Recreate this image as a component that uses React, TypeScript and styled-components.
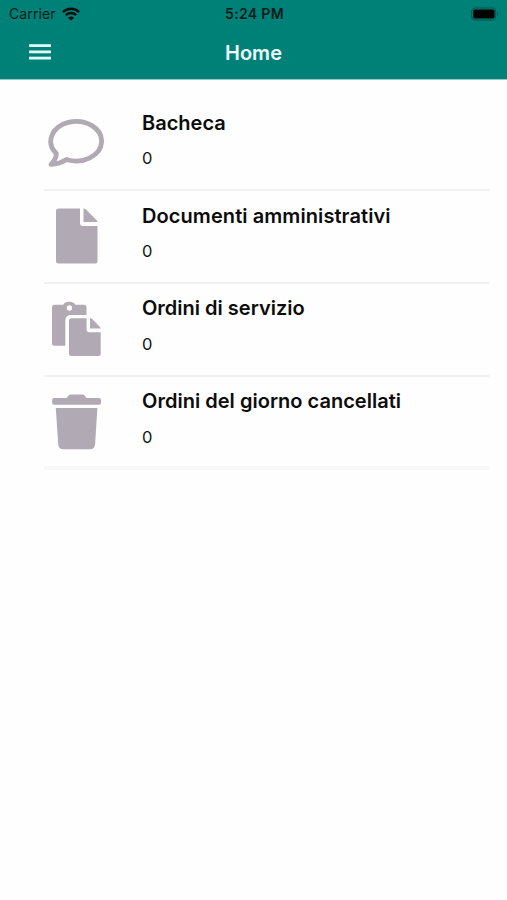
import React from "react";
import styled, { createGlobalStyle } from "styled-components";

const GlobalStyle = createGlobalStyle`
  * { box-sizing: border-box; }
  body {
    margin: 0;
    background: #fefefe;
    font-family: Inter, "Liberation Sans", sans-serif;
    color: #0c0c0c;
  }
`;

const Screen = styled.div`
  width: 507px;
  height: 900px;
  overflow: hidden;
  background: #fefefe;
`;

const Header = styled.header`
  height: 80px;
  background: #008178;
  border-bottom: 1px solid #8fc8c4;
`;

const StatusBar = styled.div`
  display: grid;
  grid-template-columns: 1fr auto 1fr;
  align-items: center;
  height: 28px;
  padding: 0 7px 0 9px;
  color: #021d1b;
  font-size: 14px;
  line-height: 20px;
`;

const Carrier = styled.div`
  display: flex;
  align-items: center;
  gap: 6px;
  letter-spacing: 0.1px;
`;

const WifiIcon = styled.svg`
  display: block;
  margin-top: -1px;
`;

const Time = styled.div`
  font-weight: 600;
  letter-spacing: 0.35px;
`;

const Battery = styled.svg`
  display: block;
  justify-self: end;
  margin-top: -1px;
`;

const NavBar = styled.div`
  display: grid;
  grid-template-columns: 1fr auto 1fr;
  align-items: center;
  height: 48px;
  padding: 0 29px;
`;

const MenuButton = styled.button`
  width: 22px;
  padding: 0;
  border: 0;
  background: none;
`;

const MenuIcon = styled.svg`
  display: block;
  fill: #e0fffc;
`;

const Title = styled.h1`
  margin: 0;
  padding-top: 2px;
  color: #effffd;
  font-size: 20px;
  font-weight: 600;
  line-height: 26px;
`;

const List = styled.ul`
  margin: 18px 18px 0 44px;
  padding: 0;
  list-style: none;
`;

const Row = styled.li<{ $last: boolean }>`
  display: flex;
  height: 93px;
  padding: 12px 0 0 4px;
  border-bottom: ${(p) => (p.$last ? "4px solid #f8f8f8" : "2px solid #f1f1f2")};
`;

const RowIcon = styled.svg`
  flex: none;
  display: block;
  margin: 5px 38px 0 0;
  fill: #b1aab5;
`;

const RowText = styled.div`
  display: flex;
  flex-direction: column;
  justify-content: space-between;
  height: 60px;
`;

const Label = styled.div<{ $spacing: number; $top: number }>`
  padding-top: ${(p) => p.$top}px;
  font-size: 20px;
  font-weight: 600;
  line-height: 24px;
  white-space: nowrap;
  letter-spacing: ${(p) => p.$spacing}px;
`;

const Count = styled.div`
  font-size: 16.5px;
  line-height: 24px;
  color: #151515;
`;

const Wifi = () => (
  <WifiIcon width="18" height="14" viewBox="0 0 18 14" fill="none" stroke="#02110f" strokeWidth="2.4">
    <path d="M0.9 5.1C5.4 0.6 12.6 0.6 17.1 5.1" />
    <path d="M3.8 8.1C6.7 5.3 11.3 5.3 14.2 8.1" />
    <path d="M9 13.8L6 10.7C7.7 9.2 10.3 9.2 12 10.7Z" fill="#02110f" stroke="none" />
  </WifiIcon>
);

const items = [
  {
    label: "Bacheca",
    spacing: 0,
    top: 1,
    icon: (
      <path
        d="M8.3 38.5A25.4 19.8 0 1 1 18.5 44.5Q11.5 49 3 49.4Q8.3 44 8.3 38.5Z"
        fill="none"
        stroke="#b1aab5"
        strokeWidth="4.8"
        strokeLinejoin="round"
      />
    ),
  },
  {
    label: "Documenti amministrativi",
    spacing: 0.08,
    top: 1,
    icon: (
      <>
        <path d="M10.5 0.5H32V15Q32 18 35 18H49.5V53Q49.5 55.5 47 55.5H10.5Q8 55.5 8 53V3Q8 0.5 10.5 0.5Z" />
        <path d="M35.5 0.5Q36.7 0.4 38 1.6L48.4 12Q49.5 13.2 49.5 14H35.5Z" />
      </>
    ),
  },
  {
    label: "Ordini di servizio",
    spacing: 0,
    top: 0,
    icon: (
      <>
        <path
          fillRule="evenodd"
          d="M6.5 3.8H15.2C16.5 -0.2 26 -0.2 27.3 3.8H36Q38.5 3.8 38.5 6.3V14H23Q17.3 14 17.3 19.7V44.7H6.5Q4 44.7 4 42.2V6.3Q4 3.8 6.5 3.8ZM24.1 7A2.7 2.7 0 1 0 18.7 7A2.7 2.7 0 1 0 24.1 7Z"
        />
        <path d="M23.5 17.2H38.6V28.5Q38.6 31.3 41.4 31.3H52.7V52.5Q52.7 55 50.2 55H23.5Q21 55 21 52.5V19.7Q21 17.2 23.5 17.2Z" />
        <path d="M42 17.2Q43.1 17 44.2 18.1L51.5 25.4Q52.7 26.6 52.7 27.6H42Z" />
      </>
    ),
  },
  {
    label: "Ordini del giorno cancellati",
    spacing: 0.02,
    top: 0,
    icon: (
      <>
        <path d="M6 4H18.5L20.5 1.4Q21.2 0.5 22.5 0.5H34.5Q35.8 0.5 36.5 1.4L38.5 4H51Q53 4 53 6V9Q53 10.8 51 10.8H6Q4.2 10.8 4.2 9V6Q4.2 4 6 4Z" />
        <path d="M7.8 14H49.4L47.1 50.3Q46.7 55.3 41.9 55.3H15.4Q10.5 55.3 10.2 50.3Z" />
      </>
    ),
  },
];

export default function App() {
  return (
    <>
      <GlobalStyle />
      <Screen>
        <Header>
          <StatusBar>
            <Carrier>
              Carrier
              <Wifi />
            </Carrier>
            <Time>5:24 PM</Time>
            <Battery width="30" height="14" viewBox="0 0 30 14">
              <rect x="1.7" y="1" width="24" height="12" rx="3" fill="none" stroke="#01514b" strokeWidth="1" />
              <rect x="3.2" y="2.5" width="21.3" height="9" rx="1.8" fill="#000" />
              <path d="M27.3 4.8Q29.4 7 27.3 9.2Z" fill="#01514b" />
            </Battery>
          </StatusBar>
          <NavBar>
            <MenuButton aria-label="Menu">
              <MenuIcon width="22" height="16" viewBox="0 0 22 16">
                <rect y="0.2" width="22" height="2.8" />
                <rect y="6.5" width="22" height="2.8" />
                <rect y="12.7" width="22" height="2.8" />
              </MenuIcon>
            </MenuButton>
            <Title>Home</Title>
          </NavBar>
        </Header>
        <List>
          {items.map((item, i) => (
            <Row key={item.label} $last={i === items.length - 1}>
              <RowIcon width="56" height="56" viewBox="0 0 56 56">
                {item.icon}
              </RowIcon>
              <RowText>
                <Label $spacing={item.spacing} $top={item.top}>
                  {item.label}
                </Label>
                <Count>0</Count>
              </RowText>
            </Row>
          ))}
        </List>
      </Screen>
    </>
  );
}
